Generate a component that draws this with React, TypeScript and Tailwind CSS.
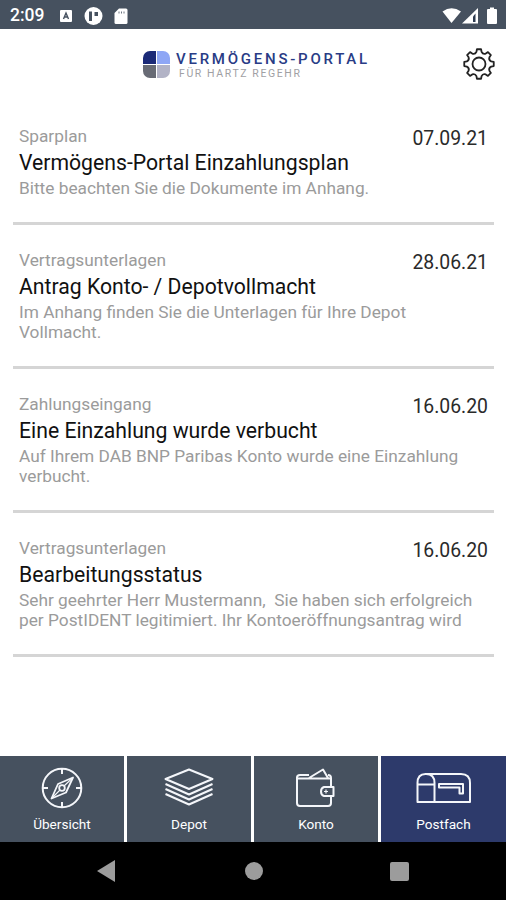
import type { ReactNode } from "react";

interface Message {
  category: string;
  title: string;
  body: string[];
  date: string;
}

const messages: Message[] = [
  {
    category: "Sparplan",
    title: "Vermögens-Portal Einzahlungsplan",
    body: ["Bitte beachten Sie die Dokumente im Anhang."],
    date: "07.09.21",
  },
  {
    category: "Vertragsunterlagen",
    title: "Antrag Konto- / Depotvollmacht",
    body: ["Im Anhang finden Sie die Unterlagen für Ihre Depot", "Vollmacht."],
    date: "28.06.21",
  },
  {
    category: "Zahlungseingang",
    title: "Eine Einzahlung wurde verbucht",
    body: ["Auf Ihrem DAB BNP Paribas Konto wurde eine Einzahlung", "verbucht."],
    date: "16.06.20",
  },
  {
    category: "Vertragsunterlagen",
    title: "Bearbeitungsstatus",
    body: [
      "Sehr geehrter Herr Mustermann,  Sie haben sich erfolgreich",
      "per PostIDENT legitimiert. Ihr Kontoeröffnungsantrag wird",
    ],
    date: "16.06.20",
  },
];

/** Closed outline of an eight-toothed gear around 0,0 */
function gearPath() {
  const at = (radius: number, degrees: number) => {
    const rad = (degrees * Math.PI) / 180;
    return `${(radius * Math.cos(rad)).toFixed(2)} ${(radius * Math.sin(rad)).toFixed(2)}`;
  };
  let d = "";
  for (let i = 0; i < 8; i++) {
    const a = i * 45;
    d += `${i === 0 ? "M" : "L"}${at(14.9, a - 8)} L${at(14.9, a + 8)} L${at(12.4, a + 12)} `;
    d += `Q${at(10.2, a + 22.5)} ${at(12.4, a + 33)} `;
  }
  return d + "Z";
}

function StatusBar() {
  return (
    <div className="flex h-[29px] shrink-0 items-center bg-[#46515f] pt-[2px] pl-[10px] pr-[8px] text-white">
      <span className="w-[50px] text-[17.5px] leading-none font-medium">2:09</span>
      <svg width="70" height="18" viewBox="0 0 70 18" fill="#fff">
        <rect x="0" y="3" width="12" height="12" rx="1" />
        <path d="M3.5 12 6 6l2.5 6M4.5 10h3" fill="none" stroke="#46515f" strokeWidth="1.4" />
        <circle cx="33.5" cy="9" r="9" />
        <path d="M29 4.5h3v9.5h-3zM34.5 5h3.5v4h-3.5z" fill="#46515f" />
        <path d="M59 1.5h7q1.5 0 1.5 1.5v12.5q0 1.5-1.5 1.5h-10q-1.5 0-1.5-1.5V6z" />
        <path d="M59 4.5v2M61.5 4.5v2M64 4.5v2" stroke="#46515f" strokeWidth=".8" />
      </svg>
      <svg className="ml-auto" width="57" height="18" viewBox="0 0 57 18" fill="#fff">
        <path d="M1.5 4.5Q10.5-2 20 4.5L10.5 16z" />
        <path d="M37 1v15.5H21z" />
        <path d="M34.5 6.5V15H32V9.5z" fill="#2d3b50" />
        <path d="M47 2h2V.5h4V2h2q1 0 1 1v13q0 1-1 1h-8q-1 0-1-1V3q0-1 1-1z" />
      </svg>
    </div>
  );
}

function Header() {
  return (
    <header className="flex h-[72px] shrink-0 items-start">
      <div className="ml-[143px] mt-[22px] grid h-[27px] w-[27px] grid-cols-2 gap-[1.5px]">
        <span className="rounded-tl-[7px] bg-[#1b2a78]" />
        <span className="rounded-tr-[7px] bg-[#8ea6f5]" />
        <span className="rounded-bl-[7px] bg-[#686b75]" />
        <span className="rounded-br-[7px] bg-[#b2b3c6]" />
      </div>
      <div className="ml-[6px] mt-[21px] whitespace-nowrap">
        <p className="text-[15px] leading-[18px] font-medium tracking-[2.75px] text-[#293c86]">
          VERMÖGENS-PORTAL
        </p>
        <p className="ml-[3px] text-[10.5px] leading-[12px] tracking-[1.6px] text-[#a0a0a4]">
          FÜR HARTZ REGEHR
        </p>
      </div>
      <svg
        className="ml-auto mr-[10px] mt-[18px]"
        width="34"
        height="34"
        viewBox="-17 -17 34 34"
        fill="none"
        stroke="#222"
        strokeWidth="1.8"
        strokeLinejoin="round"
      >
        <path d={gearPath()} />
        <circle r="6.5" />
      </svg>
    </header>
  );
}

function MessageRow({ message }: { message: Message }) {
  return (
    <article className="ml-[13px] mr-[12px] flex justify-between border-b-[3px] border-[#d5d5d5] pt-[25px] pb-6 pl-[6px] pr-[6px]">
      <div className="w-0 whitespace-pre text-[#9b9b9b]">
        <p className="text-[17.3px] leading-5">{message.category}</p>
        <h2 className="pt-[2px] text-[21.2px] leading-[30px] text-[#111]">{message.title}</h2>
        {message.body.map((line) => (
          <p key={line} className="text-[17.3px] leading-5">
            {line}
          </p>
        ))}
      </div>
      <time className="mt-[3px] text-[19.4px] leading-5 text-[#2a2a2a]">{message.date}</time>
    </article>
  );
}

function NavItem({ label, active, children }: { label: string; active?: boolean; children: ReactNode }) {
  return (
    <button
      type="button"
      className={`flex flex-col items-center pt-[10px] text-white ${active ? "bg-[#2d3a6b]" : "bg-[#46515f]"}`}
    >
      <svg
        width="56"
        height="44"
        viewBox="0 0 56 44"
        fill="none"
        stroke="#f4f6fa"
        strokeWidth="2"
        strokeLinejoin="round"
      >
        {children}
      </svg>
      <span className="mt-1 text-[13.6px] leading-5">{label}</span>
    </button>
  );
}

export default function App() {
  return (
    <div className="flex h-[900px] w-[506px] flex-col overflow-hidden bg-white font-['Roboto',sans-serif]">
      <StatusBar />
      <Header />
      <main className="grow">
        {messages.map((message) => (
          <MessageRow key={message.title} message={message} />
        ))}
      </main>

      <nav className="grid h-[86px] shrink-0 grid-cols-[124px_124px_124px_125px] gap-[3px]">
        <NavItem label="Übersicht">
          <circle cx="28" cy="22" r="19.3" />
          <path d="M28 3v5M28 36v5M9 22h5M42 22h5" />
          <path d="M39 11.5 32 26.5 17.5 32.5 24 18z" strokeWidth="1.8" />
          <circle cx="28" cy="22" r="2.8" strokeWidth="1.8" />
          <path d="m30 20 9-8.5M26 24l-8.5 8.5" strokeWidth="1.2" />
        </NavItem>
        <NavItem label="Depot">
          <path d="M28 3.5 51.5 13 28 23 4.5 13z" />
          <path d="m4.5 18 23.5 10.5 23.5-10.5M4.5 23 28 33.5l23.5-10.5M4.5 28 28 38.5l23.5-10.5" />
        </NavItem>
        <NavItem label="Konto">
          <path d="M21 9h-9q-3 0-3 2.5V37q0 3 3 3h28q3 0 3-3v-7M43 21v-9q0-3-3-3" />
          <path d="M9 12.5h34M21 12 35 3.5l5 8.5" />
          <path d="M45.5 21v9H36q-3-1-3-4.5t3-4.5z" />
          <path d="M38 23.5v4M36 25.5h4" strokeWidth="1.2" />
        </NavItem>
        <NavItem label="Postfach" active>
          <path d="M1.5 36V17q0-9 8-9H45q9 0 9 9v19zM18.5 36V17q0-9-8.5-9M2 18.5h16.5" />
          <path d="M23 18h24v9.5h-3.500v-6H23z" />
        </NavItem>
      </nav>

      <div className="flex h-[58px] shrink-0 items-center bg-black">
        <svg className="ml-[97px]" width="18" height="22" viewBox="0 0 18 22">
          <path d="M0 11 18 0v22z" fill="#9c9c9c" />
        </svg>
        <span className="ml-[130px] size-[18px] rounded-full bg-[#9c9c9c]" />
        <span className="ml-[127px] size-[19px] rounded-[2px] bg-[#9c9c9c]" />
      </div>
    </div>
  );
}
